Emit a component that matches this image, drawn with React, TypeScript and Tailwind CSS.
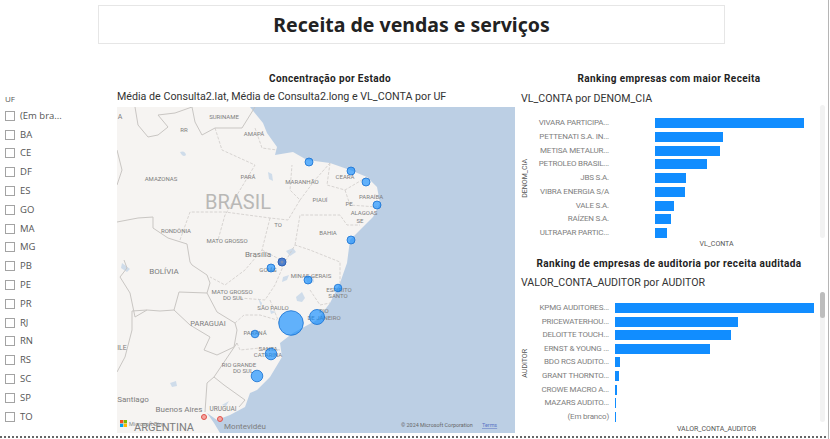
const ufs = ["(Em bra...", "BA", "CE", "DF", "ES", "GO", "MA", "MG", "PB", "PE", "PR", "RJ", "RN", "RS", "SC", "SP", "TO"];

const receita: [string, number][] = [
  ["VIVARA PARTICIPA...", 149],
  ["PETTENATI S.A. IN...", 68],
  ["METISA METALUR...", 64.5],
  ["PETROLEO BRASIL...", 52],
  ["JBS S.A.", 30.5],
  ["VIBRA ENERGIA S/A", 29.5],
  ["VALE S.A.", 18.5],
  ["RAÍZEN S.A.", 16],
  ["ULTRAPAR PARTIC...", 12],
];

const auditoria: [string, number][] = [
  ["KPMG AUDITORES...", 199],
  ["PRICEWATERHOU...", 123],
  ["DELOITTE TOUCH...", 116],
  ["ERNST & YOUNG ...", 95],
  ["BDO RCS AUDITO...", 5],
  ["GRANT THORNTO...", 4],
  ["CROWE MACRO A...", 1.5],
  ["MAZARS AUDITO...", 0.7],
  ["(Em branco)", 0.7],
];

// [x, y, size, text] em coordenadas da tela
const mapLabels: [number, number, number, string][] = [
  [224, 119, 6, "SURINAME"], [184, 132, 6, "RR"], [254, 136, 6, "AMAPÁ"], [161, 181, 6, "AMAZONAS"],
  [248, 179, 6, "PARÁ"], [302, 184, 6, "MARANHÃO"], [345, 179, 6, "CEARÁ"], [320, 202, 6, "PIAUÍ"],
  [371, 199, 6, "PARAÍBA"], [349, 206, 6, "PE"], [364, 215, 6, "ALAGOAS"], [176, 233, 6, "RONDÔNIA"],
  [227, 243, 6, "MATO GROSSO"], [278, 227, 6, "TO"], [328, 235, 6, "BAHIA"], [360, 223, 6, "SE"],
  [268, 272, 6, "GOIÁS"], [311, 278, 6, "MINAS GERAIS"], [339, 292, 6, "ESPÍRITO"], [338, 298, 6, "SANTO"],
  [232, 294, 6, "MATO GROSSO"], [233, 300, 6, "DO SUL"], [273, 310, 6, "SÃO PAULO"], [324, 313, 6, "RIO"],
  [324, 320, 6, "DE JANEIRO"], [255, 335, 6, "PARANÁ"], [268, 351, 6, "SANTA"], [268, 357, 6, "CATARINA"],
  [239, 367, 6, "RIO GRANDE"], [243, 373, 6, "DO SUL"], [223, 411, 6.5, "URUGUAI"], [164, 274, 8, "BOLÍVIA"],
  [208, 326, 7.5, "PARAGUAI"], [258, 257, 8, "Brasília"], [133, 402, 8, "Santiago"], [179, 412, 8, "Buenos Aires"],
  [245, 429, 8, "Montevidéu"], [164, 431, 11, "ARGENTINA"], [122, 350, 7, "ILE"], [120, 119, 7, "A"],
];

const bubbles: [number, number, number][] = [
  [309, 162, 4], [351, 171, 4], [366, 182, 4], [377, 205, 4], [351, 240, 4], [271, 268, 4],
  [308, 280, 4], [338, 288, 3.8], [255, 334, 3.8], [271, 354, 5.8], [257, 376, 5.8], [317, 317, 7.5], [291, 323, 12.3],
];

const borders = [
  "M135 107L138 125L148 137L158 135L168 127L158 115L175 113L192 107",
  "M192 107L195 122L202 135L215 128L242 128L255 107",
  "M117 222L138 218L153 217L153 228L168 238L187 244L190 262L192 265L207 275L210 283L207 293L179 292L174 310L160 311L147 310L132 311L132 330L125 357L117 372",
  "M174 310L190 325L210 337L204 350L217 355L234 347L237 330L235 323L217 312L207 293",
  "M237 343L214 377L207 383L205 412",
  "M214 377L224 385L245 400L239 407",
  "M117 150L122 170L117 185",
  "M124 260L127 268L120 277L130 293L135 317L147 310",
];

const stateLines = [
  "M255 128L262 148L277 150", "M215 128L222 150L255 165L225 215L218 240",
  "M180 240L190 212L225 212L270 218L288 220L300 200L290 190L292 165",
  "M270 218L262 250L245 270L225 285L210 277", "M262 250L285 262L295 245L310 250L340 262L340 283",
  "M300 200L315 180L330 163", "M330 163L327 185L345 190L367 177", "M345 190L350 205L377 207",
  "M315 215L340 215L347 225L360 225", "M295 245L300 215L315 215", "M235 323L244 315L260 315L277 320",
  "M237 343L240 350L260 348L280 350", "M240 298L265 300L275 285L285 262", "M270 300L280 325", "M310 290L320 305L330 303",
];

const lakes = [
  "M180 152q5 -2 6 3q-3 3 -6 -3z", "M268 172l4 2l1 7l-4 -2z", "M122 263l8 6l-3 3l-6 -4z", "M286 251l7 -3l3 4l-6 4z",
  "M283 277l6 -2l-2 5l-5 2z", "M296 297l6 -5l3 6l-3 4l-5 -1z", "M170 383l6 -2l1 5l-5 1z", "M258 298l4 5l-1 4z",
  "M270 310l6 2l-5 2z", "M222 405l7 -4l-3 5z", "M305 277l8 -1l1 6l-6 2z",
];

function MapVisual() {
  return (
    <svg viewBox="117 107 398 326" className="block w-[398px] h-[326px]">
      <rect x="117" y="107" width="398" height="326" fill="#bccfe4" />
      <path
        d="M117 107L250 107L263 123L267 133L277 147L275 155L293 152L307 160L330 163L350 170L367 177L377 187L380 203L373 217L370 220L350 240L347 263L340 283L330 303L317 320L293 333L280 343L282 357L270 377L257 390L250 393L245 407L230 415L217 420L207 413L214 423L220 433L117 433Z"
        fill="#f6f4f2"
      />
      {lakes.map((d) => (
        <path key={d} d={d} fill="#cfdcea" />
      ))}
      {stateLines.map((d) => (
        <path key={d} d={d} fill="none" stroke="#cfccc9" strokeWidth="0.8" strokeDasharray="3 1.5" />
      ))}
      {borders.map((d) => (
        <path key={d} d={d} fill="none" stroke="#c9c6c3" strokeWidth="1" />
      ))}
      <text x="238" y="209" fontSize="20" fill="#b9b8b6" textAnchor="middle" className="font-[Roboto,sans-serif]">BRASIL</text>
      {mapLabels.map(([x, y, size, text]) => (
        <text key={text + x} x={x} y={y} fontSize={size} fill="#7d7d7d" textAnchor="middle" className="font-[Roboto,sans-serif]">
          {text}
        </text>
      ))}
      <circle cx="282" cy="262" r="4" fill="#4c7fce" stroke="#2f62b5" />
      <circle cx="282" cy="262" r="1.5" fill="#7a8fb5" />
      {bubbles.map(([cx, cy, r]) => (
        <circle key={cx} cx={cx} cy={cy} r={r} fill="#118dff" fillOpacity="0.65" stroke="#1670d0" strokeWidth="0.8" />
      ))}
      <circle cx="204" cy="417" r="2.5" fill="#f2a6a0" stroke="#e2504a" />
      <circle cx="220" cy="419" r="2.5" fill="#f2a6a0" stroke="#e2504a" />
      <rect x="120" y="420" width="3.3" height="3.3" fill="#f25022" />
      <rect x="123.7" y="420" width="3.3" height="3.3" fill="#7fba00" />
      <rect x="120" y="423.7" width="3.3" height="3.3" fill="#00a4ef" />
      <rect x="123.7" y="423.7" width="3.3" height="3.3" fill="#ffb900" />
      <text x="129" y="425.5" fontSize="5.5" fill="#8c8c8c" className="font-[Roboto,sans-serif]">Microsoft Bing</text>
      <text x="401" y="427" fontSize="5.4" fill="#666" className="font-[Roboto,sans-serif]">© 2024 Microsoft Corporation</text>
      <text x="482" y="427" fontSize="5.4" fill="#5b74c4" textDecoration="underline" className="font-[Roboto,sans-serif]">Terms</text>
    </svg>
  );
}

function BarChart({ rows, yTitle, xTitle, audit }: { rows: [string, number][]; yTitle: string; xTitle: string; audit?: boolean }) {
  return (
    <div className="flex">
      <div className="w-[14px] ml-[3px] h-[120px] flex items-center justify-center">
        <span className="[writing-mode:vertical-rl] rotate-180 text-[7px] text-[#555]">{yTitle}</span>
      </div>
      <div className="flex flex-col">
        <div className={audit ? "flex flex-col gap-[3.6px]" : "flex flex-col gap-[3.75px]"}>
          {rows.map(([name, value]) => (
            <div key={name} className="flex items-center h-[10px]">
              <span className="w-[77px] text-right text-[8px] leading-[10px] tracking-[-0.2px] text-[#808080] whitespace-nowrap">{name}</span>
              <div className={audit ? "ml-[6px] w-[205px]" : "ml-[46px] w-[165px]"}>
                <div className="h-[10px] bg-[#118dff]" style={{ width: value }} />
              </div>
            </div>
          ))}
        </div>
        <div className={audit ? "mt-[3px] pl-[81px] w-[288px] text-center text-[7px] leading-[9px] text-[#555]" : "mt-[2px] pl-[81px] w-[288px] text-center text-[7px] leading-[9px] text-[#555]"}>
          {xTitle}
        </div>
      </div>
    </div>
  );
}

export default function App() {
  return (
    <div className="w-[830px] h-[439px] bg-white overflow-hidden flex font-['Roboto',sans-serif] text-[#252423]">
      <div className="w-[828px] shrink-0 flex flex-col">
        <header className="pt-[5px] pl-[98px] h-[44px] shrink-0">
          <div className="w-[627px] h-[39px] border border-[#e6e6e6] flex items-center justify-center">
            <h1 className="font-['Noto_Sans',sans-serif] font-bold text-[19.5px] leading-none text-[#222]">Receita de vendas e serviços</h1>
          </div>
        </header>

        <main className="flex h-[390px] shrink-0">
          <aside className="w-[117px] shrink-0 pt-[50px] pl-[5px] font-['Open_Sans',sans-serif]">
            <div className="text-[8px] leading-[10px] text-[#555] mb-[2.5px]">UF</div>
            <ul className="flex flex-col">
              {ufs.map((uf) => (
                <li key={uf} className="flex items-center h-[18.8px] gap-[5px] text-[9.5px] text-[#555]">
                  <span className="w-[10px] h-[10px] border border-[#a3a3a3] shrink-0" />
                  <span>{uf}</span>
                </li>
              ))}
            </ul>
          </aside>

          <section className="w-[398px] shrink-0 flex flex-col">
            <h2 className="h-[36px] pt-[29px] pl-[28px] text-center text-[10px] leading-[12px] font-bold tracking-[0.38px] text-[#222]">Concentração por Estado</h2>
            <p className="h-[27px] pt-[10px] text-[10.7px] leading-[14px] whitespace-nowrap text-[#333]">
              Média de Consulta2.lat, Média de Consulta2.long e VL_CONTA por UF
            </p>
            <MapVisual />
          </section>

          <section className="w-[313px] shrink-0 flex flex-col">
            <div className="h-[203px] relative">
              <h2 className="pt-[29px] text-center text-[10px] leading-[12px] font-bold tracking-[0.38px] text-[#222] w-[308px]">Ranking empresas com maior Receita</h2>
              <p className="pl-[6px] mt-[7px] text-[10.6px] leading-[14px] text-[#333]">VL_CONTA por DENOM_CIA</p>
              <div className="mt-[12px]">
                <BarChart rows={receita} yTitle="DENOM_CIA" xTitle="VL_CONTA" />
              </div>
              <div className="absolute right-[3px] top-[61px] w-[5px] h-[133px] rounded-full bg-[#f2f2f2]" />
            </div>
            <div className="flex-1 relative">
              <h2 className="pt-[11px] text-center text-[10px] leading-[12px] font-bold tracking-[0.38px] text-[#222] w-[308px]">Ranking de empresas de auditoria por receita auditada</h2>
              <p className="pl-[6px] mt-[6px] text-[10.6px] leading-[14px] text-[#333]">VALOR_CONTA_AUDITOR por AUDITOR</p>
              <div className="mt-[13px]">
                <BarChart rows={auditoria} yTitle="AUDITOR" xTitle="VALOR_CONTA_AUDITOR" audit />
              </div>
              <div className="absolute right-[3px] top-[45px] w-[5px] h-[130px] rounded-full bg-[#f2f2f2]">
                <div className="w-[5px] h-[26px] rounded-full bg-[#bdbdbd]" />
              </div>
            </div>
          </section>
        </main>

        <div className="mt-[2px] h-[2px] bg-[repeating-linear-gradient(90deg,#666_0_2px,transparent_2px_4px)]" />
      </div>
      <div className="w-[1px] h-full bg-[#b5b5b5]" />
    </div>
  );
}
